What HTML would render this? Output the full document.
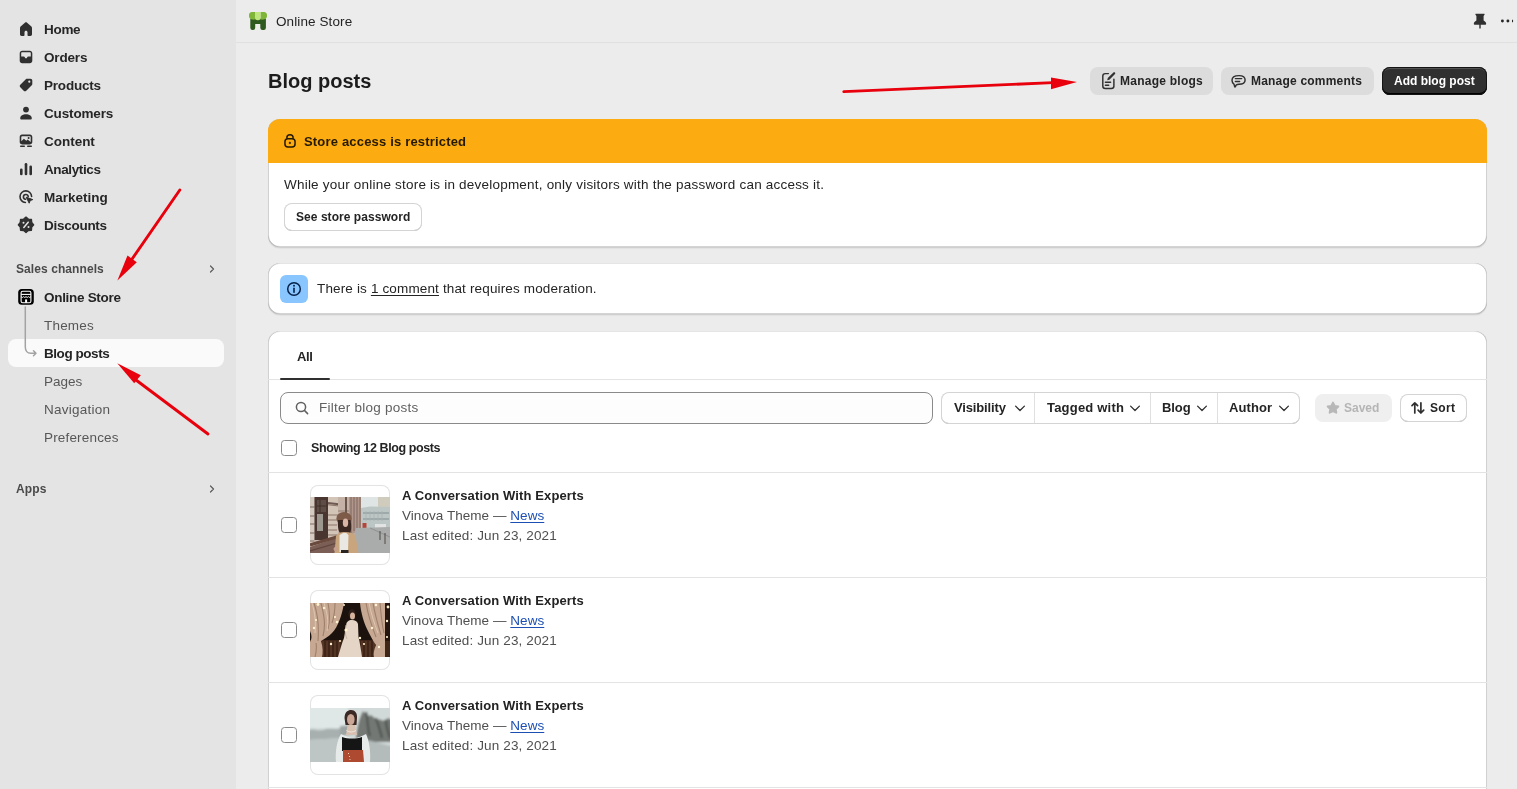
<!DOCTYPE html>
<html><head><meta charset="utf-8">
<style>
*{box-sizing:border-box;margin:0;padding:0}
html,body{width:1517px;height:789px;overflow:hidden}
body{font-family:"Liberation Sans",sans-serif;background:#ececec;color:#303030;position:relative;font-size:13px}
.abs{position:absolute}
.t{position:absolute;white-space:nowrap;will-change:transform}
.card{position:absolute;background:#fff;border-radius:12px;box-shadow:inset 1px 0 0 rgba(0,0,0,.18),inset -1px 0 0 rgba(0,0,0,.18),inset 0 -1px 0 rgba(0,0,0,.17),inset 0 1px 0 rgba(204,204,204,.5),0 1px 0 rgba(26,26,26,.09),0 1.5px 1px rgba(0,0,0,.04)}
.cb{position:absolute;width:16px;height:16px;border:1px solid #8a8a8a;border-radius:3.5px;background:#fff}
svg{position:absolute;overflow:visible}
</style></head><body>
<div class="abs" style="left:0;top:0;width:236px;height:789px;background:#e4e4e4"></div>
<svg style="left:18px;top:21px" width="16" height="16" viewBox="0 0 16 16"><path d="M8 1.3c-.4 0-.8.15-1.1.42L2.6 5.6C2.2 5.95 2 6.45 2 7v6.3c0 .9.7 1.6 1.6 1.6h1.9c.6 0 1-.45 1-1v-2.6c0-.8.7-1.5 1.5-1.5s1.5.7 1.5 1.5v2.6c0 .55.45 1 1 1h1.9c.9 0 1.6-.7 1.6-1.6V7c0-.55-.2-1.050-.6-1.4L9.1 1.72C8.8 1.45 8.4 1.3 8 1.3z" fill="#303030"/></svg>
<svg style="left:18px;top:49px" width="16" height="16" viewBox="0 0 16 16"><path d="M4.2 1.8h7.6c1.4 0 2.5 1.1 2.5 2.5v7.4c0 1.4-1.1 2.5-2.5 2.5H4.2c-1.4 0-2.5-1.1-2.5-2.5V4.3c0-1.4 1.1-2.5 2.5-2.5zm-1 5.6h2.5c.6 0 1 .5 1.2 1 .2.6.6.9 1.1.9s.9-.3 1.1-.9c.2-.5.6-1 1.2-1h2.5V4.3c0-.6-.4-1-1-1H4.2c-.6 0-1 .4-1 1z" fill="#303030"/></svg>
<svg style="left:18px;top:77px" width="16" height="16" viewBox="0 0 16 16"><path d="M9.2 1.8h3.3c1 0 1.8.8 1.8 1.8v3.3c0 .5-.2 1-.55 1.3l-5.5 5.5c-.7.7-1.85.7-2.55 0L2.3 10.3c-.7-.7-.7-1.85 0-2.55l5.5-5.5c.35-.3.85-.45 1.4-.45zM11.3 5.8a1.1 1.1 0 1 0 0-2.2 1.1 1.1 0 0 0 0 2.2z" fill="#303030"/></svg>
<svg style="left:18px;top:105px" width="16" height="16" viewBox="0 0 16 16"><circle cx="8" cy="4.6" r="2.9" fill="#303030"/><path d="M2.2 13.2c0-2.4 2.6-4 5.8-4s5.8 1.6 5.8 4c0 .8-.6 1.3-1.3 1.3H3.5c-.7 0-1.3-.5-1.3-1.3z" fill="#303030"/></svg>
<svg style="left:18px;top:133px" width="16" height="16" viewBox="0 0 16 16"><path d="M4 1.6h8c1.3 0 2.3 1 2.3 2.3v5.2c0 1.3-1 2.3-2.3 2.3H4c-1.3 0-2.3-1-2.3-2.3V3.9c0-1.3 1-2.3 2.3-2.3z" fill="#303030"/><path d="M3.3 8.2l2.6-2.5 2.4 2 1.4-1.1 3 2.3V4c0-.5-.3-.8-.8-.8H4.1c-.5 0-.8.3-.8.8z" fill="#e3e3e3"/><circle cx="10.6" cy="5" r="1" fill="#303030"/><rect x="2" y="12.6" width="5" height="1.4" rx=".7" fill="#303030"/><rect x="9" y="12.6" width="5" height="1.4" rx=".7" fill="#303030"/></svg>
<svg style="left:18px;top:161px" width="16" height="16" viewBox="0 0 16 16"><rect x="2" y="7.5" width="2.6" height="6.8" rx="1.3" fill="#303030"/><rect x="6.7" y="2" width="2.6" height="12.3" rx="1.3" fill="#303030"/><rect x="11.4" y="4.5" width="2.6" height="9.8" rx="1.3" fill="#303030"/></svg>
<svg style="left:18px;top:189px" width="16" height="16" viewBox="0 0 16 16"><path d="M13.6 7.5A5.8 5.8 0 1 0 7.4 13.5" fill="none" stroke="#303030" stroke-width="1.6" stroke-linecap="round"/><path d="M10.2 7.6A2.4 2.4 0 1 0 7.5 10.3" fill="none" stroke="#303030" stroke-width="1.6" stroke-linecap="round"/><path d="M8.2 8.2l6.6 2.4-2.6 1 -1 2.6z" fill="#303030" stroke="#303030" stroke-width="1" stroke-linejoin="round"/></svg>
<svg style="left:14px;top:213px" width="24" height="24" viewBox="14 213 24 24"><path d="M26.00 217.10 L23.63 219.07 L20.56 219.36 L20.27 222.43 L18.30 224.80 L20.27 227.17 L20.56 230.24 L23.63 230.53 L26.00 232.50 L28.37 230.53 L31.44 230.24 L31.73 227.17 L33.70 224.80 L31.73 222.43 L31.44 219.36 L28.37 219.07z" fill="#303030" stroke="#303030" stroke-width="1.3" stroke-linejoin="round"/><path d="M28.2 222.2l-4.4 5.3" stroke="#e4e4e4" stroke-width="1.5" stroke-linecap="round"/><circle cx="23.5" cy="222.7" r="1" fill="#e4e4e4"/><circle cx="28.5" cy="226.9" r="1" fill="#e4e4e4"/></svg>
<div class="t" style="left:44px;top:20.82px;font-size:13.5px;line-height:17px;font-weight:bold;color:#262626;letter-spacing:-0.3px;">Home</div>
<div class="t" style="left:44px;top:48.82px;font-size:13.5px;line-height:17px;font-weight:bold;color:#262626;letter-spacing:-0.16px;">Orders</div>
<div class="t" style="left:44px;top:76.82px;font-size:13.5px;line-height:17px;font-weight:bold;color:#262626;letter-spacing:-0.2px;">Products</div>
<div class="t" style="left:44px;top:104.82px;font-size:13.5px;line-height:17px;font-weight:bold;color:#262626;letter-spacing:-0.15px;">Customers</div>
<div class="t" style="left:44px;top:132.82px;font-size:13.5px;line-height:17px;font-weight:bold;color:#262626;letter-spacing:-0.02px;">Content</div>
<div class="t" style="left:44px;top:160.82px;font-size:13.5px;line-height:17px;font-weight:bold;color:#262626;letter-spacing:-0.39px;">Analytics</div>
<div class="t" style="left:44px;top:188.82px;font-size:13.5px;line-height:17px;font-weight:bold;color:#262626;">Marketing</div>
<div class="t" style="left:44px;top:216.82px;font-size:13.5px;line-height:17px;font-weight:bold;color:#262626;letter-spacing:-0.27px;">Discounts</div>
<div class="t" style="left:16px;top:261.84px;font-size:12px;line-height:15px;font-weight:bold;color:#4a4a4a;letter-spacing:0.08px;">Sales channels</div>
<div class="t" style="left:44px;top:288.82px;font-size:13.5px;line-height:17px;font-weight:bold;color:#242424;letter-spacing:-0.3px;">Online Store</div>
<div class="t" style="left:44px;top:316.82px;font-size:13.5px;line-height:17px;font-weight:normal;color:#575757;letter-spacing:0.2px;">Themes</div>
<div class="abs" style="left:8px;top:339px;width:216px;height:28px;background:#fafafa;border-radius:8px"></div>
<div class="t" style="left:44px;top:344.82px;font-size:13.5px;line-height:17px;font-weight:bold;color:#242424;letter-spacing:-0.45px;">Blog posts</div>
<div class="t" style="left:44px;top:372.82px;font-size:13.5px;line-height:17px;font-weight:normal;color:#575757;">Pages</div>
<div class="t" style="left:44px;top:400.82px;font-size:13.5px;line-height:17px;font-weight:normal;color:#575757;letter-spacing:0.25px;">Navigation</div>
<div class="t" style="left:44px;top:428.82px;font-size:13.5px;line-height:17px;font-weight:normal;color:#575757;letter-spacing:0.17px;">Preferences</div>
<div class="t" style="left:16px;top:481.84px;font-size:12px;line-height:15px;font-weight:bold;color:#4a4a4a;letter-spacing:0.1px;">Apps</div>
<svg style="left:206px;top:263px" width="12" height="12" viewBox="0 0 12 12"><path d="M4.5 3l3 3-3 3" fill="none" stroke="#5a5a5a" stroke-width="1.2" stroke-linecap="round" stroke-linejoin="round"/></svg>
<svg style="left:14px;top:285px" width="24" height="24" viewBox="14 285 24 24"><rect x="18.2" y="289" width="15.6" height="15.8" rx="3.6" fill="#000"/><rect x="21.1" y="291.2" width="9.8" height="11.6" rx="1.6" fill="none" stroke="#fff" stroke-width="1.1"/><path d="M21.1 294.4h9.8" stroke="#fff" stroke-width="1.1"/><path d="M21.1 296.7q1.22 1.5 2.45 0q1.22 1.5 2.45 0q1.22 1.5 2.45 0q1.22 1.5 2.45 0" fill="none" stroke="#fff" stroke-width="1"/><rect x="25.1" y="299.4" width="2" height="3.4" fill="#fff"/></svg>

<svg style="left:0;top:0" width="40" height="370" viewBox="0 0 40 370"><path d="M25.3 307v40c0 3.5 2 6.3 5.5 6.3H36M33.5 350.8l2.5 2.5-2.5 2.5" fill="none" stroke="#a3a3a3" stroke-width="1.5" stroke-linecap="round" stroke-linejoin="round"/></svg>
<svg style="left:206px;top:483px" width="12" height="12" viewBox="0 0 12 12"><path d="M4.5 3l3 3-3 3" fill="none" stroke="#5a5a5a" stroke-width="1.2" stroke-linecap="round" stroke-linejoin="round"/></svg>
<div class="abs" style="left:236px;top:42px;width:1281px;height:1px;background:#e0e0e0"></div>
<svg style="left:244px;top:8px" width="28" height="26" viewBox="0 0 28 26"><path d="M6.3 10.5H21.9V19.8Q21.9 22 19.7 22H18.5Q16.3 22 16.3 19.8V16H11.2V19.8Q11.2 22 9 22H8.5Q6.3 22 6.3 19.8Z" fill="#2f5a1f"/><path d="M7.8 4h3.5v7.3c-1 .5-2 .5-2.8.3C6.5 11.3 5 10 5 8.2V7C5 5.4 6.2 4 7.8 4z" fill="#7fb539"/><path d="M20.2 4h-3.7v7.3c1 .5 2 .5 2.8.3 2-.3 3.7-1.6 3.7-3.4V7C23 5.4 21.8 4 20.2 4z" fill="#7fb539"/><path d="M11.2 4h5.3v7.3c-1.6 1.2-3.8 1.2-5.3 0z" fill="#bde67e"/></svg>
<svg style="left:1470px;top:10px" width="20" height="22" viewBox="1470 10 20 22"><path d="M1476 13.8h8c.5 0 .8.6.5 1l-.9 1.2v4.6c1.5.8 2.6 2 2.6 3.3 0 .5-.4.8-.9.8h-4.6v3.3l-.7 1-.7-1v-3.3h-4.6c-.5 0-.9-.3-.9-.8 0-1.3 1.1-2.5 2.6-3.3V16l-.9-1.2c-.3-.4 0-1 .5-1z" fill="#303030"/></svg>
<svg style="left:1495px;top:14px" width="22" height="14" viewBox="1495 14 22 14"><circle cx="1502.4" cy="21" r="1.45" fill="#262626"/><circle cx="1507.9" cy="21" r="1.45" fill="#262626"/><path d="M1512 19.5a1.6 1.6 0 0 1 0 3.1z" fill="#262626"/></svg>
<div class="t" style="left:276px;top:12.82px;font-size:13.5px;line-height:17px;font-weight:normal;color:#242424;letter-spacing:0.1px;">Online Store</div>
<div class="t" style="left:268px;top:68.57px;font-size:20px;line-height:25px;font-weight:bold;color:#1c1c1c;">Blog posts</div>
<div class="abs" style="left:1090px;top:67px;width:123px;height:28px;background:#dcdcdc;border-radius:8px"></div>
<div class="abs" style="left:1221px;top:67px;width:153px;height:28px;background:#dcdcdc;border-radius:8px"></div>
<div class="abs" style="left:1382px;top:67px;width:105px;height:28px;background:#303030;border-radius:8px;box-shadow:inset 0 0 0 1px #141414, inset 0 -2px 0 #000, inset 0 2px 0 rgba(255,255,255,.16)"></div>
<div class="t" style="left:1120px;top:74.34px;font-size:12px;line-height:15px;font-weight:bold;color:#242424;letter-spacing:0.25px;">Manage blogs</div>
<div class="t" style="left:1251px;top:74.34px;font-size:12px;line-height:15px;font-weight:bold;color:#242424;letter-spacing:0.2px;">Manage comments</div>
<div class="t" style="left:1394px;top:74.34px;font-size:12px;line-height:15px;font-weight:bold;color:#ffffff;">Add blog post</div>
<svg style="left:1096px;top:68px" width="28" height="26" viewBox="1096 68 28 26"><path d="M1108.4 73.6H1105.3c-1.6 0-2.5.9-2.5 2.5v9.9c0 1.6.9 2.5 2.5 2.5h6.1c1.6 0 2.5-.9 2.5-2.5V79.1" fill="none" stroke="#303030" stroke-width="1.45" stroke-linecap="round"/><path d="M1107.2 80.2l.6-2.1 5.6-5.6c.45-.45 1.15-.45 1.6 0 .45.45.45 1.15 0 1.6l-5.6 5.6z" fill="#303030"/><path d="M1105.4 82.3h5.2M1105.4 85.2h3.3" stroke="#303030" stroke-width="1.45" stroke-linecap="round"/></svg>
<svg style="left:1226px;top:68px" width="28" height="26" viewBox="1226 68 28 26"><path d="M1239 75.6c3.6 0 6.1 1.8 6.1 4.4s-2.6 4.3-6.2 4.3c-.9 0-1.8.1-2.6.5l-.9 1.9c-.2.3-.6.3-.7 0l-.6-2.3c-1.3-.9-2.1-2.3-2.1-4.1 0-2.9 2.9-4.7 7-4.7z" fill="none" stroke="#303030" stroke-width="1.45" stroke-linejoin="round"/><path d="M1235.4 78.6h6.3M1235.4 81.4h4.2" stroke="#303030" stroke-width="1.45" stroke-linecap="round"/></svg>
<div class="card" style="left:268px;top:119px;width:1219px;height:128px;overflow:hidden"><div style="position:absolute;left:0;top:0;width:100%;height:44px;background:#fcab10"></div></div>
<div class="t" style="left:304px;top:133.50px;font-size:13px;line-height:16px;font-weight:bold;color:#251a00;letter-spacing:0.18px;">Store access is restricted</div>
<div class="t" style="left:284px;top:176.02px;font-size:13.5px;line-height:17px;font-weight:normal;color:#242424;letter-spacing:0.21px;">While your online store is in development, only visitors with the password can access it.</div>
<div class="abs" style="left:284px;top:203px;width:138px;height:28px;background:#fff;border-radius:8px;box-shadow:inset 0 0 0 1px #d4d4d4, inset 0 -1px 0 #b5b5b5"></div>
<div class="t" style="left:295.5px;top:210.34px;font-size:12px;line-height:15px;font-weight:bold;color:#242424;letter-spacing:0.05px;">See store password</div>
<div class="card" style="left:268px;top:263px;width:1219px;height:51px"></div>
<div class="abs" style="left:280px;top:275px;width:28px;height:28px;background:#89c6ff;border-radius:6px"></div>
<div class="t" style="left:316.5px;top:280.22px;font-size:13.5px;line-height:17px;font-weight:normal;color:#242424;letter-spacing:0.15px;">There is <span style="text-decoration:underline;text-underline-offset:2px">1 comment</span> that requires moderation.</div>
<div class="card" style="left:268px;top:331px;width:1219px;height:480px"></div>
<div class="t" style="left:297px;top:348.50px;font-size:13px;line-height:16px;font-weight:bold;color:#242424;letter-spacing:-0.4px;">All</div>
<div class="abs" style="left:268px;top:379px;width:1219px;height:1px;background:#e3e3e3"></div>
<div class="abs" style="left:280px;top:378px;width:50px;height:2px;background:#303030;border-radius:1px"></div>
<div class="abs" style="left:280px;top:392px;width:653px;height:32px;background:#fdfdfd;border:1px solid #8a8a8a;border-radius:8px"></div>
<div class="t" style="left:319px;top:399.02px;font-size:13.5px;line-height:17px;font-weight:normal;color:#616161;letter-spacing:0.25px;">Filter blog posts</div>
<div class="abs" style="left:941px;top:392px;width:359px;height:32px;background:#fff;border-radius:8px;box-shadow:inset 0 0 0 1px #d4d4d4, inset 0 -1px 0 #b5b5b5"></div>
<div class="abs" style="left:1034px;top:393px;width:1px;height:30px;background:#e0e0e0"></div>
<div class="abs" style="left:1150px;top:393px;width:1px;height:30px;background:#e0e0e0"></div>
<div class="abs" style="left:1217px;top:393px;width:1px;height:30px;background:#e0e0e0"></div>
<div class="t" style="left:954px;top:400.20px;font-size:13px;line-height:16px;font-weight:bold;color:#242424;letter-spacing:-0.15px;">Visibility</div>
<div class="t" style="left:1046.5px;top:400.20px;font-size:13px;line-height:16px;font-weight:bold;color:#242424;letter-spacing:0.2px;">Tagged with</div>
<div class="t" style="left:1161.5px;top:400.20px;font-size:13px;line-height:16px;font-weight:bold;color:#242424;letter-spacing:-0.1px;">Blog</div>
<div class="t" style="left:1229px;top:400.20px;font-size:13px;line-height:16px;font-weight:bold;color:#242424;letter-spacing:0.08px;">Author</div>
<div class="abs" style="left:1315px;top:394px;width:77px;height:28px;background:#efefef;border-radius:8px"></div>
<div class="t" style="left:1344px;top:401.34px;font-size:12px;line-height:15px;font-weight:bold;color:#b5b5b5;">Saved</div>
<div class="abs" style="left:1400px;top:394px;width:67px;height:28px;background:#fff;border-radius:8px;box-shadow:inset 0 0 0 1px #d4d4d4, inset 0 -1px 0 #b5b5b5"></div>
<div class="t" style="left:1430px;top:401.34px;font-size:12px;line-height:15px;font-weight:bold;color:#242424;letter-spacing:0.3px;">Sort</div>
<svg style="left:294px;top:400px" width="16" height="16" viewBox="0 0 16 16"><circle cx="7" cy="7" r="4.6" fill="none" stroke="#616161" stroke-width="1.5"/><path d="M10.4 10.4l3.2 3.2" stroke="#616161" stroke-width="1.5" stroke-linecap="round"/></svg>
<svg style="left:1013.5px;top:402px" width="12" height="12" viewBox="0 0 12 12"><path d="M1.6 4.1L6 8.5l4.4-4.4" fill="none" stroke="#303030" stroke-width="1.3" stroke-linecap="round" stroke-linejoin="round"/></svg>
<svg style="left:1128.5px;top:402px" width="12" height="12" viewBox="0 0 12 12"><path d="M1.6 4.1L6 8.5l4.4-4.4" fill="none" stroke="#303030" stroke-width="1.3" stroke-linecap="round" stroke-linejoin="round"/></svg>
<svg style="left:1196.3px;top:402px" width="12" height="12" viewBox="0 0 12 12"><path d="M1.6 4.1L6 8.5l4.4-4.4" fill="none" stroke="#303030" stroke-width="1.3" stroke-linecap="round" stroke-linejoin="round"/></svg>
<svg style="left:1278px;top:402px" width="12" height="12" viewBox="0 0 12 12"><path d="M1.6 4.1L6 8.5l4.4-4.4" fill="none" stroke="#303030" stroke-width="1.3" stroke-linecap="round" stroke-linejoin="round"/></svg>
<svg style="left:1325px;top:400px" width="16" height="16" viewBox="0 0 16 16"><path d="M8 2.6l1.7 3.4 3.6.5-2.6 2.6.6 3.6L8 11l-3.3 1.7.6-3.6-2.6-2.6 3.6-.5z" fill="#b8b8b8" stroke="#b8b8b8" stroke-width="2" stroke-linejoin="round"/></svg>
<svg style="left:1410px;top:400px" width="16" height="16" viewBox="0 0 16 16"><path d="M4.8 13V2.8M2 5.6l2.8-2.8 2.8 2.8M10.9 2.8V13M8.1 10.2l2.8 2.8 2.8-2.8" fill="none" stroke="#303030" stroke-width="1.7" stroke-linecap="round" stroke-linejoin="round"/></svg>
<div class="cb" style="left:281px;top:440px"></div>
<div class="t" style="left:310.5px;top:439.67px;font-size:12.5px;line-height:16px;font-weight:bold;color:#242424;letter-spacing:-0.4px;">Showing 12 Blog posts</div>
<div class="abs" style="left:268px;top:472px;width:1219px;height:1px;background:#e3e3e3"></div>
<div class="abs" style="left:268px;top:577px;width:1219px;height:1px;background:#e3e3e3"></div>
<div class="cb" style="left:281px;top:517px"></div>
<div class="abs" style="left:310px;top:485px;width:80px;height:80px;border-radius:8px;box-shadow:inset 0 0 0 1px #e3e3e3;overflow:hidden;background:#fff"><svg style="left:0;top:12px;overflow:hidden" width="80" height="56" viewBox="0 0 80 56"><defs><filter id="bl1" x="-5%" y="-5%" width="110%" height="110%"><feGaussianBlur stdDeviation="0.8"/></filter></defs>
<rect x="0" y="0" width="80" height="56" fill="#c6b4a9"/>
<g filter="url(#bl1)" opacity=".55">
<rect x="-2" y="-2" width="84" height="60" fill="#c6b4a9"/>
</g>
<rect x="0" y="0" width="4.5" height="50" fill="#d6cbc2"/>
<path d="M0 10h4.5M0 19h4.5M0 27h4.5M0 36h4.5M0 44h4.5" stroke="#7d6a62" stroke-width="1"/>
<rect x="4.5" y="0" width="13.5" height="43" fill="#4a3630"/>
<rect x="7" y="17" width="6" height="17" fill="#9c978f"/>
<path d="M7 3h9v12H7z" fill="#5e4d47"/>
<path d="M10 3v12M7 9h9" stroke="#3a2a25" stroke-width=".8"/>
<rect x="18" y="0" width="10" height="42" fill="#d3c4b8"/>
<path d="M18 7.8 L38 10M18 18h10M18 23h10M18 28h9M18 33h9M18 38h9" stroke="#8c766b" stroke-width="1.1"/>
<path d="M18 6 L40 8.5" stroke="#6e5a52" stroke-width="2"/>
<rect x="28" y="0" width="11" height="34" fill="#c5b2a6"/>
<path d="M28 14h11M28 20h11M28 26h11" stroke="#8f7a6e" stroke-width="1"/>
<rect x="35" y="0" width="2" height="16" fill="#6b544a"/>
<path d="M39 0 L51 0 L51 34 L39 38z" fill="#b0968b"/>
<path d="M41 0v36M44 0v34M47 0v33M50 0v32" stroke="#7b6259" stroke-width=".9"/>
<rect x="51" y="0" width="17" height="12" fill="#dfe5e4"/>
<rect x="68" y="0" width="12" height="13" fill="#cfcbbd"/>
<path d="M51 11 L60 9.5 L80 10 L80 31 L51 31z" fill="#bcc6c5"/>
<path d="M53 16h26M53 22h26" stroke="#94a0a0" stroke-width="1.3"/>
<path d="M56 14v10M60 14v10M64 14v10M68 14v10M72 14v10" stroke="#a9b3b3" stroke-width=".8"/>
<rect x="52.5" y="26" width="4" height="5" fill="#b3453a"/>
<rect x="65" y="27" width="11" height="4" fill="#e2e4e4"/>
<path d="M46 31 L80 30 L80 56 L40 56z" fill="#a9acaa"/>
<path d="M60 31 L80 40" stroke="#8f9290" stroke-width="1"/>
<path d="M75 36v11M70 34v9" stroke="#4f4a47" stroke-width="1"/>
<path d="M0 50 L28 40.5 L28 56 L0 56z" fill="#7b5e55"/>
<path d="M0 48 L30 39" stroke="#6b4a3e" stroke-width="3.2"/>
<path d="M0 54 L27 46" stroke="#5f453c" stroke-width="1.2"/>
<ellipse cx="34" cy="21.5" rx="7.6" ry="6.6" fill="#7d5b48"/>
<path d="M28 23 C27.5 30 28.5 34.5 30 36 L40 36 C41.5 34 41.5 28 40.5 23z" fill="#3b2722"/>
<ellipse cx="35.5" cy="25.8" rx="2.7" ry="4.2" fill="#d8b5a4"/>
<path d="M24.5 56 L26 39 C27.5 36 30 35 35 35 C40 35 43.5 36 45.5 39 L48.5 56z" fill="#c9a57e"/>
<path d="M29.5 55 L29.5 38.5 C31 36.5 33 36 35 36 C36.5 36 37.5 36.5 38.5 38.5 L38 55z" fill="#e9e8e2"/>
<rect x="31" y="53" width="7.5" height="3" fill="#2a2420"/>
<ellipse cx="25.5" cy="52" rx="2" ry="2" fill="#c8a08e"/>
</svg>
</div>
<div class="t" style="left:401.5px;top:487.50px;font-size:13px;line-height:16px;font-weight:bold;color:#222222;letter-spacing:0.12px;">A Conversation With Experts</div>
<div class="t" style="left:401.5px;top:506.82px;font-size:13.5px;line-height:17px;font-weight:normal;color:#4f4f4f;letter-spacing:0.05px;">Vinova Theme — <span style="color:#1c4fb4;text-decoration:underline;text-underline-offset:1.5px">News</span></div>
<div class="t" style="left:401.5px;top:526.82px;font-size:13.5px;line-height:17px;font-weight:normal;color:#4f4f4f;letter-spacing:0.13px;">Last edited: Jun 23, 2021</div>
<div class="abs" style="left:268px;top:682px;width:1219px;height:1px;background:#e3e3e3"></div>
<div class="cb" style="left:281px;top:622px"></div>
<div class="abs" style="left:310px;top:590px;width:80px;height:80px;border-radius:8px;box-shadow:inset 0 0 0 1px #e3e3e3;overflow:hidden;background:#fff">
<svg style="left:0;top:13px;overflow:hidden" width="80" height="54" viewBox="0 0 80 54">
<rect x="0" y="0" width="80" height="54" fill="#1c120d"/>
<rect x="0" y="37" width="80" height="17" fill="#3e2518"/>
<path d="M13 38v16M17 38v16M21 38v16M25 38v16M29 38v16M52 38v16M56 38v16M60 38v16M64 38v16" stroke="#6a4630" stroke-width="1"/>
<path d="M0 0 L34 0 C32 12 28 24 22 30 C18 34 14 36 11 38 C13 44 13 50 12 54 L0 54 L0 39 C2 36 2 32 0 28z" fill="#c7a892"/>
<path d="M4 0 C8 12 9 26 8 38 M11 0 C14 12 16 22 13 33 M18 0 C20 10 20 18 18 26 M25 0 C25 8 24 14 22 20 M6 40 C7 45 6 50 5 54" stroke="#9f806b" stroke-width="1.1" fill="none"/>
<path d="M2 0 C5 10 6 20 5 30 M14 0 C17 10 19 18 17 28" stroke="#ddc6b4" stroke-width="1" fill="none"/>
<path d="M80 0 L50 0 C51 10 54 20 57 26 C60 32 63 38 66 42 C64 47 63 51 64 54 L75 54 L75 38 L80 38z" fill="#c7a892"/>
<path d="M56 0 C58 12 62 24 66 34 M63 0 C65 12 68 22 71 32 M70 0 C71 12 72 22 74 30" stroke="#9f806b" stroke-width="1.1" fill="none"/>
<path d="M59 0 C61 10 64 20 68 30" stroke="#ddc6b4" stroke-width="1" fill="none"/>
<rect x="75" y="0" width="5" height="38" fill="#24160f"/>
<ellipse cx="42" cy="11" rx="3.6" ry="4.8" fill="#2e1f19"/>
<ellipse cx="42.5" cy="13" rx="2.5" ry="3.6" fill="#d7b49c"/>
<path d="M36.5 20 C38 17.5 40 17 42 17 C45 17 47 18 48 21 L48.5 34 C50 40 51 47 52 54 L28 54 C30 47 32 40 34 35z" fill="#e4d5c6"/>
<path d="M36 22 C35 28 35 32 37 36" stroke="#c9b6a4" stroke-width="1" fill="none"/>
<g fill="#fff2cf"><circle cx="8" cy="1.5" r="1.4"/><circle cx="14" cy="5" r="1.2"/><circle cx="6" cy="17" r="1.1"/><circle cx="4" cy="25" r="1.2"/><circle cx="25" cy="14" r="1.1"/><circle cx="27" cy="19" r="1.3"/><circle cx="36" cy="27" r="1.6"/><circle cx="21" cy="41" r="1.2"/><circle cx="30" cy="38" r="1"/><circle cx="50" cy="35" r="1.2"/><circle cx="54" cy="41" r="1.1"/><circle cx="62" cy="25" r="1.2"/><circle cx="66" cy="2" r="1.3"/><circle cx="78" cy="4" r="1.4"/><circle cx="77" cy="18" r="1.2"/><circle cx="77" cy="34" r="1.1"/><circle cx="69" cy="44" r="1.2"/><circle cx="34" cy="2" r="1"/></g>
</svg>
</div>
<div class="t" style="left:401.5px;top:592.50px;font-size:13px;line-height:16px;font-weight:bold;color:#222222;letter-spacing:0.12px;">A Conversation With Experts</div>
<div class="t" style="left:401.5px;top:611.82px;font-size:13.5px;line-height:17px;font-weight:normal;color:#4f4f4f;letter-spacing:0.05px;">Vinova Theme — <span style="color:#1c4fb4;text-decoration:underline;text-underline-offset:1.5px">News</span></div>
<div class="t" style="left:401.5px;top:631.82px;font-size:13.5px;line-height:17px;font-weight:normal;color:#4f4f4f;letter-spacing:0.13px;">Last edited: Jun 23, 2021</div>
<div class="abs" style="left:268px;top:787px;width:1219px;height:1px;background:#e3e3e3"></div>
<div class="cb" style="left:281px;top:727px"></div>
<div class="abs" style="left:310px;top:695px;width:80px;height:80px;border-radius:8px;box-shadow:inset 0 0 0 1px #e3e3e3;overflow:hidden;background:#fff">
<svg style="left:0;top:13px;overflow:hidden" width="80" height="54" viewBox="0 0 80 54"><defs><filter id="bl3" x="-10%" y="-10%" width="120%" height="120%"><feGaussianBlur stdDeviation="1"/></filter></defs>
<rect x="0" y="0" width="80" height="54" fill="#cfd7d6"/>
<g filter="url(#bl3)">
<rect x="-2" y="-2" width="84" height="58" fill="#d2dad9"/>
<rect x="-2" y="-2" width="40" height="22" fill="#e0e7e7"/>
<path d="M-2 22 C4 20 10 24 16 21 C20 20 26 22 32 20 L34 30 L-2 32z" fill="#a7b0af"/>
<path d="M-2 32 L30 30 L30 56 L-2 56z" fill="#bdc6c5"/>
<path d="M46 30 C47 18 50 8 53 3 C56 6 58 9 61 7 C64 9 67 13 70 11 C73 14 75 12 78 10 L82 12 L82 34 L46 34z" fill="#737874"/>
<path d="M44 32 C56 30 70 36 82 38 L82 56 L42 56z" fill="#b3bcbb"/>
<path d="M30 18 L42 17 L44 26 L30 28z" fill="#9ca4a3"/>
<path d="M56 4 C58 10 57 20 60 28 M66 10 C68 16 70 22 72 30 M76 12 C76 18 78 24 80 30" stroke="#4f5450" stroke-width="2.2" fill="none"/>
</g>
<path d="M34.5 10 C34.5 4 38 2 41 2 C45 2 47.5 5 47 10 L46.5 17 L35.5 17z" fill="#3a2824"/>
<ellipse cx="40.8" cy="11.5" rx="3.8" ry="5.5" fill="#c9a696"/>
<path d="M37.5 17 L45 17 L47 27 L36 27z" fill="#d8c0b0"/>
<path d="M36.5 22.5 C39 24.5 43 24.5 46 22.5" stroke="#efe6da" stroke-width="1" fill="none"/>
<path d="M26 54 C25 44 27 32 31 26 C35 28 40 30 44 30 C48 30 52 28 56 26 C59 32 61 44 60 54z" fill="#e6ebe9"/>
<path d="M32 29 C38 31 46 31 52 29 L52 43 L32 43z" fill="#151515"/>
<path d="M33 42 L53 42 L54 54 L33 54z" fill="#ae4a2f"/>
<path d="M38.5 45v1M39.5 48v1M40 51v1" stroke="#f0d8c8" stroke-width=".9"/>
</svg>
</div>
<div class="t" style="left:401.5px;top:697.50px;font-size:13px;line-height:16px;font-weight:bold;color:#222222;letter-spacing:0.12px;">A Conversation With Experts</div>
<div class="t" style="left:401.5px;top:716.82px;font-size:13.5px;line-height:17px;font-weight:normal;color:#4f4f4f;letter-spacing:0.05px;">Vinova Theme — <span style="color:#1c4fb4;text-decoration:underline;text-underline-offset:1.5px">News</span></div>
<div class="t" style="left:401.5px;top:736.82px;font-size:13.5px;line-height:17px;font-weight:normal;color:#4f4f4f;letter-spacing:0.13px;">Last edited: Jun 23, 2021</div>
<svg style="left:280px;top:131px" width="20" height="20" viewBox="0 0 20 20"><rect x="4.95" y="7.75" width="10.1" height="8.2" rx="3" fill="none" stroke="#251a00" stroke-width="1.5"/><path d="M6.9 7.8V6.6C6.9 4.6 8.2 3.75 10 3.75s3.1.85 3.1 2.85V7.8" fill="none" stroke="#251a00" stroke-width="1.5"/><path d="M9.9 10.6l1.3 1.3-1.3 1.3-1.3-1.3z" fill="#251a00"/></svg>
<svg style="left:284px;top:279px" width="20" height="20" viewBox="0 0 20 20"><circle cx="10" cy="10" r="6.3" fill="none" stroke="#062148" stroke-width="1.5"/><path d="M10 9.2v4" stroke="#062148" stroke-width="1.6" stroke-linecap="round"/><circle cx="10" cy="6.7" r=".95" fill="#062148"/></svg>
<svg style="left:0;top:0" width="1517" height="789" viewBox="0 0 1517 789">
<g stroke="#e8000d" stroke-width="2.9" stroke-linecap="round" fill="none"><path d="M179.8 190 L130 262"/><path d="M208 434 L136 380"/><path d="M843.8 91.6 L1053 82.6"/></g>
<g fill="#e8000d"><path d="M117.4 280.5 L127.5 255.5 L136.8 262.3 z"/><path d="M117.3 363.2 L140.8 375.3 L134.2 383.3 z"/><path d="M1077 82.1 L1051 77.6 L1051 89.2 z"/></g>
</svg>
</body></html>
